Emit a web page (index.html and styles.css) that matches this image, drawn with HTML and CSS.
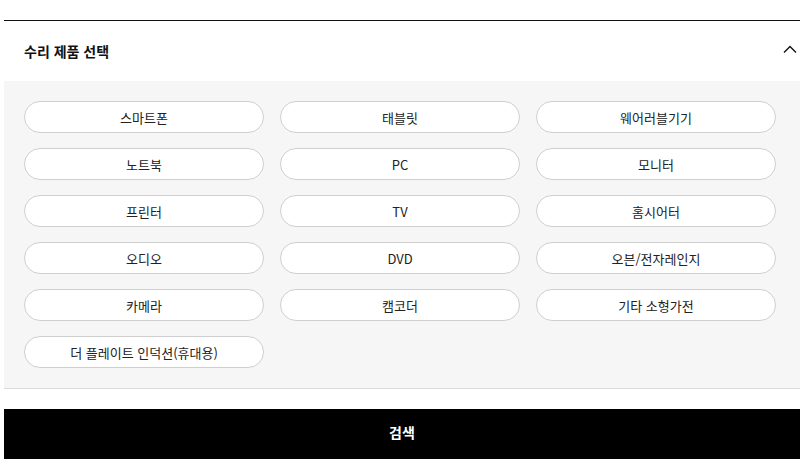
FILE: index.html
```html
<!DOCTYPE html>
<html lang="ko">
<head>
<meta charset="utf-8">
<link rel="stylesheet" href="styles.css">
</head>
<body>
<div class="wrap">
  <div class="head">
    <h2 class="title">수리 제품 선택</h2>
    <svg class="chev" width="14" height="8" viewBox="0 0 14 8"><path d="M1 7.5 L7 1.5 L13 7.5" fill="none" stroke="#111" stroke-width="1.4"/></svg>
  </div>
  <div class="panel">
    <div class="grid">
      <button class="chip">스마트폰</button>
      <button class="chip">태블릿</button>
      <button class="chip">웨어러블기기</button>
      <button class="chip">노트북</button>
      <button class="chip">PC</button>
      <button class="chip">모니터</button>
      <button class="chip">프린터</button>
      <button class="chip">TV</button>
      <button class="chip">홈시어터</button>
      <button class="chip">오디오</button>
      <button class="chip">DVD</button>
      <button class="chip">오븐/전자레인지</button>
      <button class="chip">카메라</button>
      <button class="chip">캠코더</button>
      <button class="chip">기타 소형가전</button>
      <button class="chip">더 플레이트 인덕션(휴대용)</button>
    </div>
  </div>
  <button class="search">검색</button>
</div>
</body>
</html>
```
FILE: styles.css
```css
html, body { margin: 0; padding: 0; background: #fff; }
body { font-family: "Noto Sans CJK KR", "Noto Sans", sans-serif; color: #111; }
.wrap { margin: 20px 0 0 4px; width: 796px; border-top: 1px solid #111; }
.head { height: 60px; display: flex; align-items: center; justify-content: space-between; padding: 0 3px 0 20px; }
.title { margin: 0; font-size: 14px; font-weight: 700; color: #111; line-height: 1; }
.chev { display: block; margin-top: -4px; }
.panel { background: #f6f6f6; border-bottom: 1px solid #dcdcdc; padding: 20px 20px 20px 20px; }
.grid { display: grid; grid-template-columns: repeat(3, 240px); column-gap: 16px; row-gap: 15px; }
.chip { height: 32px; border: 1px solid #cfcfcf; border-radius: 16px; background: #fff; font-family: "Noto Sans CJK KR", "Noto Sans", sans-serif; font-size: 13px; color: #222; padding: 0; line-height: 1; }
.search { display: block; width: 100%; height: 50px; margin-top: 20px; border: 0; background: #000; color: #fff; font-family: "Noto Sans CJK KR", "Noto Sans", sans-serif; font-size: 14px; font-weight: 700; padding: 0 0 4px 0; line-height: 1; }
```
